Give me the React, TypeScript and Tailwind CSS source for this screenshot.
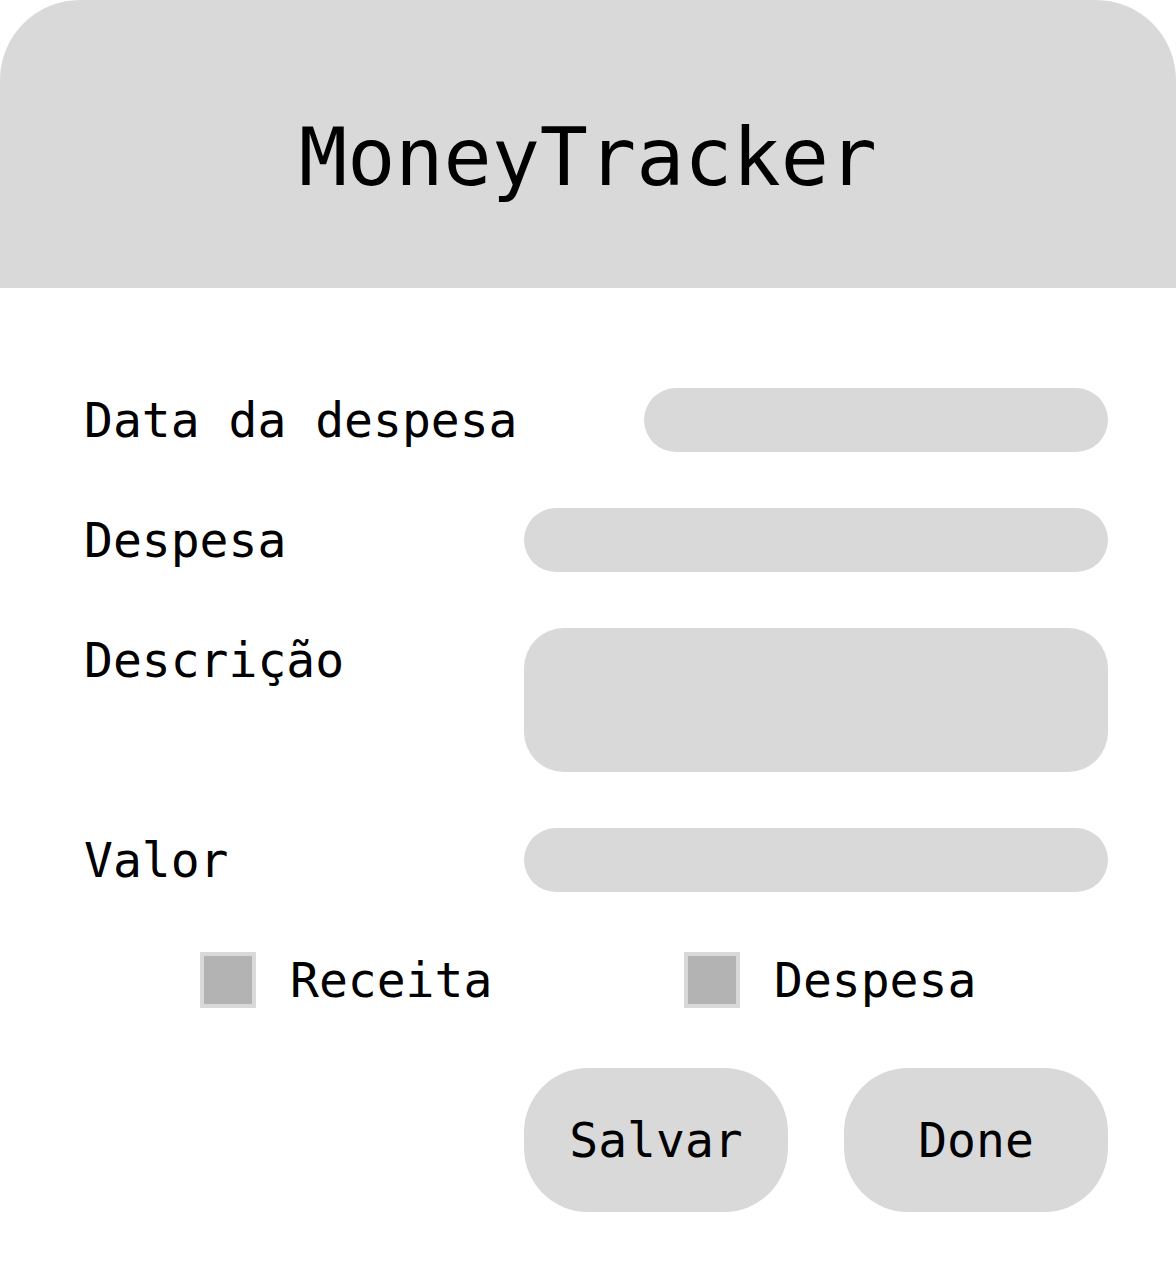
import React from 'react';

const mono = "font-['DejaVu_Sans_Mono',_'Liberation_Mono',_monospace]";

function Field({ label, wide, tall }: { label: string; wide?: boolean; tall?: boolean }) {
  return (
    <div className="flex items-start justify-between">
      <span className="h-16 flex items-center text-[48px] leading-none text-black whitespace-pre">{label}</span>
      <div
        className={`bg-[#d9d9d9] ${wide ? 'w-[584px]' : 'w-[464px]'} ${
          tall ? 'h-[144px] rounded-[40px]' : 'h-16 rounded-full'
        }`}
      />
    </div>
  );
}

function Check({ label }: { label: string }) {
  return (
    <label className="flex items-center gap-[34px]">
      <span className="w-14 h-14 border-4 border-[#d9d9d9] bg-[#b3b3b3]" />
      <span className="text-[48px] leading-none text-black">{label}</span>
    </label>
  );
}

export default function App() {
  return (
    <div className={`w-[1176px] h-[1280px] bg-white ${mono}`}>
      {/* Header */}
      <header className="h-[288px] bg-[#d9d9d9] rounded-t-[80px] flex items-center justify-center pt-[28px]">
        <h1 className="text-[80px] leading-none text-black">MoneyTracker</h1>
      </header>

      {/* Form */}
      <div className="pl-[84px] pr-[68px] pt-[100px] flex flex-col gap-14">
        <Field label="Data da despesa" />
        <Field label="Despesa" wide />
        <Field label="Descrição" wide tall />
        <Field label="Valor" wide />
      </div>

      <div className="flex pt-[60px] pl-[200px]">
        <div className="w-[484px]">
          <Check label="Receita" />
        </div>
        <Check label="Despesa" />
      </div>

      <div className="flex justify-end gap-14 pt-[60px] pr-[68px]">
        <button className="w-[264px] h-[144px] rounded-[64px] bg-[#d9d9d9] text-[48px] text-black">Salvar</button>
        <button className="w-[264px] h-[144px] rounded-[64px] bg-[#d9d9d9] text-[48px] text-black">Done</button>
      </div>
    </div>
  );
}
